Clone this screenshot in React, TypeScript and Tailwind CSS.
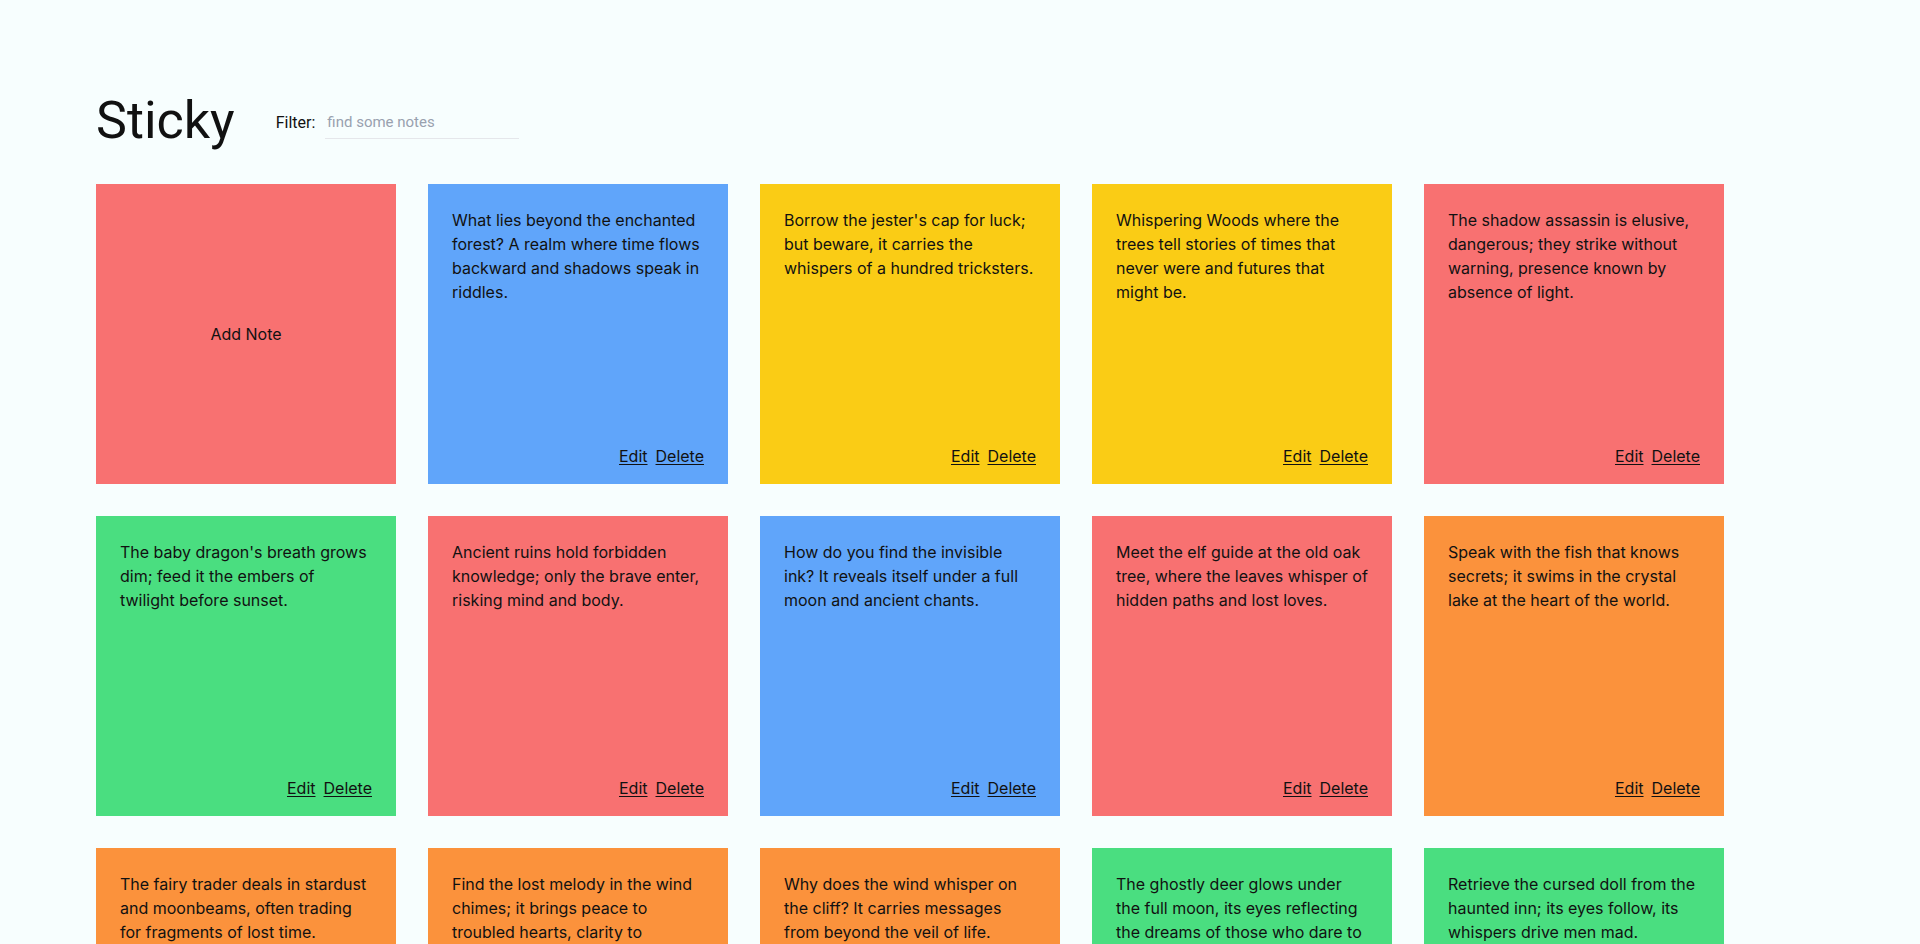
import { useState } from 'react'

type Note = { id: number; text: string; color: string }

const notes: Note[] = [
  { id: 1, text: 'What lies beyond the enchanted forest? A realm where time flows backward and shadows speak in riddles.', color: 'bg-[#60a5fa]' },
  { id: 2, text: "Borrow the jester's cap for luck; but beware, it carries the whispers of a hundred tricksters.", color: 'bg-[#facc15]' },
  { id: 3, text: 'Whispering Woods where the trees tell stories of times that never were and futures that might be.', color: 'bg-[#facc15]' },
  { id: 4, text: 'The shadow assassin is elusive, dangerous; they strike without warning, presence known by absence of light.', color: 'bg-[#f87171]' },
  { id: 5, text: "The baby dragon's breath grows dim; feed it the embers of twilight before sunset.", color: 'bg-[#4ade80]' },
  { id: 6, text: 'Ancient ruins hold forbidden knowledge; only the brave enter, risking mind and body.', color: 'bg-[#f87171]' },
  { id: 7, text: 'How do you find the invisible ink? It reveals itself under a full moon and ancient chants.', color: 'bg-[#60a5fa]' },
  { id: 8, text: 'Meet the elf guide at the old oak tree, where the leaves whisper of hidden paths and lost loves.', color: 'bg-[#f87171]' },
  { id: 9, text: 'Speak with the fish that knows secrets; it swims in the crystal lake at the heart of the world.', color: 'bg-[#fb923c]' },
  { id: 10, text: 'The fairy trader deals in stardust and moonbeams, often trading for fragments of lost time.', color: 'bg-[#fb923c]' },
  { id: 11, text: 'Find the lost melody in the wind chimes; it brings peace to troubled hearts, clarity to clouded minds.', color: 'bg-[#fb923c]' },
  { id: 12, text: 'Why does the wind whisper on the cliff? It carries messages from beyond the veil of life.', color: 'bg-[#fb923c]' },
  { id: 13, text: 'The ghostly deer glows under the full moon, its eyes reflecting the dreams of those who dare to follow.', color: 'bg-[#4ade80]' },
  { id: 14, text: 'Retrieve the cursed doll from the haunted inn; its eyes follow, its whispers drive men mad.', color: 'bg-[#4ade80]' },
]

export default function App() {
  const [filter, setFilter] = useState('')
  const shown = notes.filter((n) => n.text.toLowerCase().includes(filter.toLowerCase()))

  return (
    <div className="min-h-screen bg-[#f7fefe] px-24 pt-[95px] pb-16 text-[#111] font-['Inter',sans-serif]">
      {/* Header */}
      <header className="flex h-[52px] items-center gap-[41px] font-['Roboto',sans-serif]">
        <h1 className="text-[52px] font-normal leading-none">Sticky</h1>
        <label className="flex items-center gap-2.5 pt-1 text-base">
          Filter:
          <input
            value={filter}
            onChange={(e) => setFilter(e.target.value)}
            placeholder="find some notes"
            className="w-[194px] border-b border-[#e5e7eb] bg-transparent px-0.5 py-1 text-[15px] text-gray-700 outline-none placeholder:text-gray-400"
          />
        </label>
      </header>

      {/* Notes */}
      <div className="mt-[37px] flex flex-wrap gap-8">
        <button className="flex h-[300px] w-[300px] items-center justify-center bg-[#f87171] text-base">
          Add Note
        </button>
        {shown.map((n) => (
          <div key={n.id} className={`flex h-[300px] w-[300px] flex-col justify-between p-6 pb-4 ${n.color}`}>
            <p className="text-base leading-6">{n.text}</p>
            <div className="flex justify-end gap-2 text-base leading-6">
              <button className="underline underline-offset-2">Edit</button>
              <button className="underline underline-offset-2">Delete</button>
            </div>
          </div>
        ))}
      </div>
    </div>
  )
}
